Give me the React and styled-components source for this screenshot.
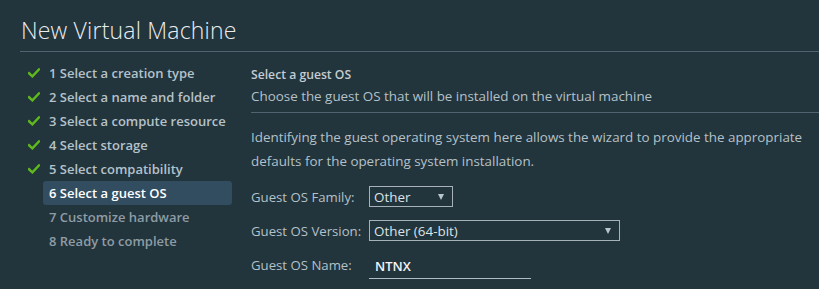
import React from "react";
import styled, { createGlobalStyle } from "styled-components";

const Global = createGlobalStyle`
  html, body { margin: 0; padding: 0; background: #22343c; }
  body { font-family: "Open Sans", "Noto Sans", sans-serif; overflow: hidden; }
`;

const Page = styled.div`
  width: 819px;
  height: 289px;
  background: #22343c;
  padding-left: 20px;
  box-sizing: border-box;
  overflow: hidden;
`;

const Header = styled.div`
  height: 51px;
  border-bottom: 1px solid #4f6470;
  display: flex;
  align-items: flex-end;
`;

const Title = styled.h1`
  margin: 0 0 7px 1px;
  font-size: 23px;
  font-weight: 300;
  color: #eaedf0;
  letter-spacing: 0.2px;
  line-height: 28px;
`;

const Body = styled.div`
  display: flex;
`;

const Nav = styled.ul`
  list-style: none;
  margin: 0;
  padding: 9px 0 0 0;
  width: 231px;
  flex: none;
`;

const Step = styled.li`
  height: 24px;
  display: flex;
  align-items: center;
`;

const CheckSlot = styled.span`
  width: 23px;
  display: flex;
  justify-content: flex-start;
  padding-left: 8px;
  box-sizing: border-box;
  flex: none;
`;

const StepLabel = styled.span`
  display: flex;
  align-items: center;
  height: 24px;
  width: 189px;
  padding-left: 6px;
  box-sizing: border-box;
  border-radius: 3px;
  font-size: 13px;
  font-weight: 600;
  white-space: nowrap;
  background: ${(p) => (p.$active ? "#324d5f" : "transparent")};
  color: ${(p) => (p.$active ? "#ffffff" : p.$done ? "#b5c2ca" : "#8e9ca5")};
`;

const Content = styled.div`
  flex: 1;
  padding-top: 13px;
`;

const SectionTitle = styled.div`
  font-size: 12.2px;
  font-weight: 600;
  color: #c3ccd2;
  line-height: 20px;
  height: 20px;
`;

const SectionDesc = styled.div`
  font-size: 13.4px;
  color: #b5c1c8;
  line-height: 22px;
  height: 22px;
  padding-bottom: 5px;
  border-bottom: 1px solid #4f6470;
`;

const Para = styled.p`
  margin: 12px 0 0 0;
  font-size: 13.4px;
  color: #b5c1c8;
  line-height: 24px;
`;

const Form = styled.div`
  margin-top: 13px;
  display: flex;
  flex-direction: column;
  gap: 13px;
`;

const FormRow = styled.div`
  display: flex;
  align-items: center;
  height: 21px;
`;

const Label = styled.span`
  width: 118px;
  flex: none;
  font-size: 13.2px;
  color: #b5c1c8;
`;

const Select = styled.div`
  width: ${(p) => p.$w}px;
  height: 21px;
  box-sizing: border-box;
  border: 1px solid #a7b2b8;
  display: flex;
  align-items: center;
  justify-content: space-between;
  padding: 0 8px 0 4px;
  font-size: 13.4px;
  color: #dce3e7;
`;

const Arrow = styled.span`
  width: 0;
  height: 0;
  border-left: 3.5px solid transparent;
  border-right: 3.5px solid transparent;
  border-top: 6px solid #b9c5cc;
`;

const Input = styled.div`
  width: 162px;
  height: 24px;
  box-sizing: border-box;
  border-bottom: 1px solid #b0bcc3;
  padding: 0 0 0 6px;
  margin-top: 4px;
  display: flex;
  align-items: center;
  font-size: 13px;
  font-weight: 600;
  color: #f2f5f7;
`;

const Check = () => (
  <svg width="12" height="10" viewBox="0 0 12 10">
    <path d="M1 5.2 L4.4 8.4 L11 1.4" stroke="#5fb91c" strokeWidth="2.4" fill="none" strokeLinecap="square" />
  </svg>
);

const steps = [
  { t: "1 Select a creation type", done: true },
  { t: "2 Select a name and folder", done: true },
  { t: "3 Select a compute resource", done: true },
  { t: "4 Select storage", done: true },
  { t: "5 Select compatibility", done: true },
  { t: "6 Select a guest OS", active: true },
  { t: "7 Customize hardware" },
  { t: "8 Ready to complete" },
];

export default function App() {
  return (
    <Page>
      <Global />
      <Header>
        <Title>New Virtual Machine</Title>
      </Header>
      <Body>
        <Nav>
          {steps.map((s) => (
            <Step key={s.t}>
              <CheckSlot>{s.done ? <Check /> : null}</CheckSlot>
              <StepLabel $active={s.active} $done={s.done}>{s.t}</StepLabel>
            </Step>
          ))}
        </Nav>
        <Content>
          <SectionTitle>Select a guest OS</SectionTitle>
          <SectionDesc>Choose the guest OS that will be installed on the virtual machine</SectionDesc>
          <Para>
            Identifying the guest operating system here allows the wizard to provide the appropriate
            <br />
            defaults for the operating system installation.
          </Para>
          <Form>
            <FormRow>
              <Label>Guest OS Family:</Label>
              <Select $w={84}>
                <span>Other</span>
                <Arrow />
              </Select>
            </FormRow>
            <FormRow>
              <Label>Guest OS Version:</Label>
              <Select $w={251}>
                <span>Other (64-bit)</span>
                <Arrow />
              </Select>
            </FormRow>
            <FormRow>
              <Label>Guest OS Name:</Label>
              <Input>NTNX</Input>
            </FormRow>
          </Form>
        </Content>
      </Body>
    </Page>
  );
}
